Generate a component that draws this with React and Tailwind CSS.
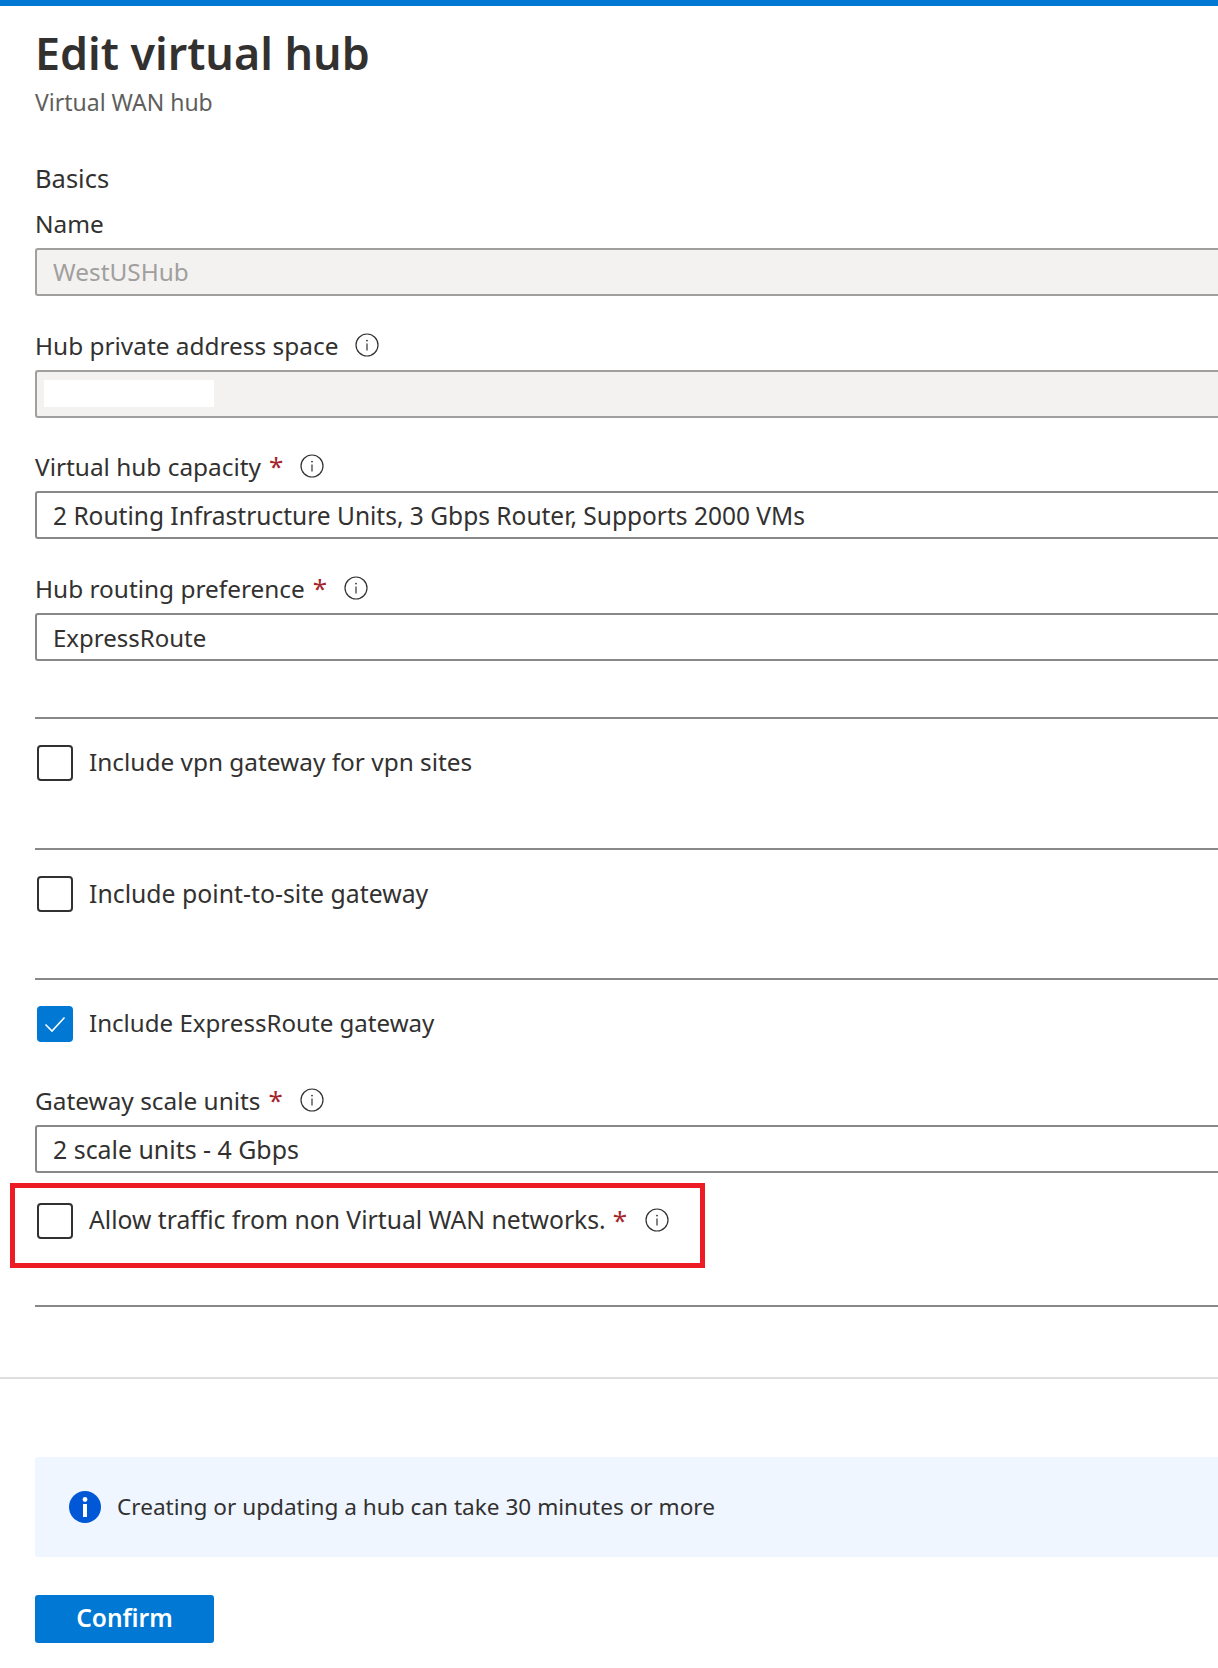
function InfoIcon({ className }) {
  return (
    <svg viewBox="0 0 24 24" className={className} fill="none">
      <circle cx="12" cy="12" r="11" stroke="#323130" strokeWidth="1.2" />
      <circle cx="12" cy="7.6" r="0.9" fill="#323130" />
      <path d="M12 10.6v7" stroke="#323130" strokeWidth="1.2" />
    </svg>
  );
}

function Star({ gap = "ml-[8px]" }) {
  return <span className={gap + " mb-[2px] text-[#a4262c] text-[26px] leading-none"}>*</span>;
}

function Field({ label, required, value, disabled, valueClass, margin = "mt-[35px]", children }) {
  return (
    <div className={margin}>
      <div className="flex items-center h-[30px] mb-[9px]">
        <span>{label}</span>
        {required && <Star />}
        <InfoIcon className="w-6 h-6 ml-[17px] mb-[2px]" />
      </div>
      <div
        className={
          disabled
            ? "flex items-center h-12 pl-[16px] border-y-2 border-l-2 rounded-l-[3px] border-[#a19f9d] bg-[#f3f2f1]"
            : "flex items-center h-12 pl-[16px] border-y-2 border-l-2 rounded-l-[3px] border-[#8a8886] bg-white"
        }
      >
        {children || <span className={valueClass}>{value}</span>}
      </div>
    </div>
  );
}

function CheckRow({ label, checked, labelClass }) {
  return (
    <div className="flex items-center h-9 pl-[2px]">
      <div
        className={
          checked
            ? "flex items-center justify-center w-9 h-9 rounded-[4px] bg-[#0078d4]"
            : "w-9 h-9 rounded-[4px] border-2 border-[#323130] bg-white"
        }
      >
        {checked && (
          <svg viewBox="0 0 24 24" className="w-6 h-6" fill="none">
            <path d="M2.5 12.5l6.5 6.5L21.5 5.5" stroke="white" strokeWidth="1.6" />
          </svg>
        )}
      </div>
      <span className={"ml-[16px] mb-[2px] " + (labelClass || "")}>{label}</span>
    </div>
  );
}

function App() {
  return (
    <div className="w-[1218px] min-h-[1668px] bg-white overflow-hidden text-[#323130] text-[24.4px] leading-[30px] font-['Noto_Sans',sans-serif]">
      <div className="h-1.5 bg-[#0078d4]" />

      <div className="pl-[35px]">
        <h1 className="mt-[19px] text-[44.8px] leading-[56px] font-semibold">Edit virtual hub</h1>
        <div className="mt-[6px] text-[23px] text-[#605e5c]">Virtual WAN hub</div>

        <div className="mt-[46px] mb-[16px] text-[25.5px]">Basics</div>

        <div className="mb-[9px]">Name</div>
        <div className="flex items-center h-12 pl-[16px] border-y-2 border-l-2 rounded-l-[3px] border-[#a19f9d] bg-[#f3f2f1] text-[#a19f9d]">
          WestUSHub
        </div>

        <Field label="Hub private address space" disabled>
          <div className="w-[170px] h-[27px] -ml-[9px] -mt-[2px] bg-white" />
        </Field>
        <Field
          label="Virtual hub capacity"
          required
          margin="mt-[34px]"
          valueClass="pt-[2px] text-[24.5px]"
          value="2 Routing Infrastructure Units, 3 Gbps Router, Supports 2000 VMs"
        />
        <Field label="Hub routing preference" required valueClass="pt-[2px] text-[24px]" value="ExpressRoute" />

        <div className="mt-[56px] border-t-2 border-[#8a8886] pt-[26px] pb-[67px]">
          <CheckRow label="Include vpn gateway for vpn sites" />
        </div>
        <div className="border-t-2 border-[#8a8886] pt-[26px] pb-[66px]">
          <CheckRow label="Include point-to-site gateway" labelClass="text-[24.8px]" />
        </div>
        <div className="border-t-2 border-[#8a8886] pt-[26px] pb-[9px]">
          <CheckRow label="Include ExpressRoute gateway" labelClass="text-[24.1px]" checked />
        </div>

        <Field label="Gateway scale units" required valueClass="text-[24.9px]" value="2 scale units - 4 Gbps" />

        <div className="relative mt-[30px] flex items-center h-9 pl-[2px]">
          <div className="w-9 h-9 rounded-[4px] border-2 border-[#323130] bg-white" />
          <span className="ml-[16px] mb-[2px] text-[24.7px]">Allow traffic from non Virtual WAN networks.</span>
          <Star gap="ml-[7px]" />
          <InfoIcon className="w-6 h-6 ml-[18px] mb-[2px]" />
          <div className="absolute -top-[20px] -left-[25px] w-[695px] h-[85px] border-[5px] border-[#ed1c24]" />
        </div>

        <div className="mt-[66px] border-t-2 border-[#8a8886]" />
      </div>

      <div className="mt-[70px] border-t-2 border-[#e1dfdd]" />

      <div className="pl-[35px]">
        <div className="mt-[78px] flex items-center h-[100px] pl-[34px] rounded-l-[3px] bg-[#eff6ff]">
          <svg viewBox="0 0 32 32" className="w-8 h-8" fill="none">
            <circle cx="16" cy="16" r="16" fill="#0058d6" />
            <circle cx="16" cy="8.5" r="2.4" fill="white" />
            <rect x="14" y="13" width="4" height="13" fill="white" />
          </svg>
          <span className="ml-[16px] text-[22.6px]">Creating or updating a hub can take 30 minutes or more</span>
        </div>

        <button className="mt-[38px] w-[179px] h-12 pb-[2px] rounded-[3px] bg-[#0078d4] text-white text-[24.5px] font-semibold">
          Confirm
        </button>
      </div>
    </div>
  );
}

export default App;
